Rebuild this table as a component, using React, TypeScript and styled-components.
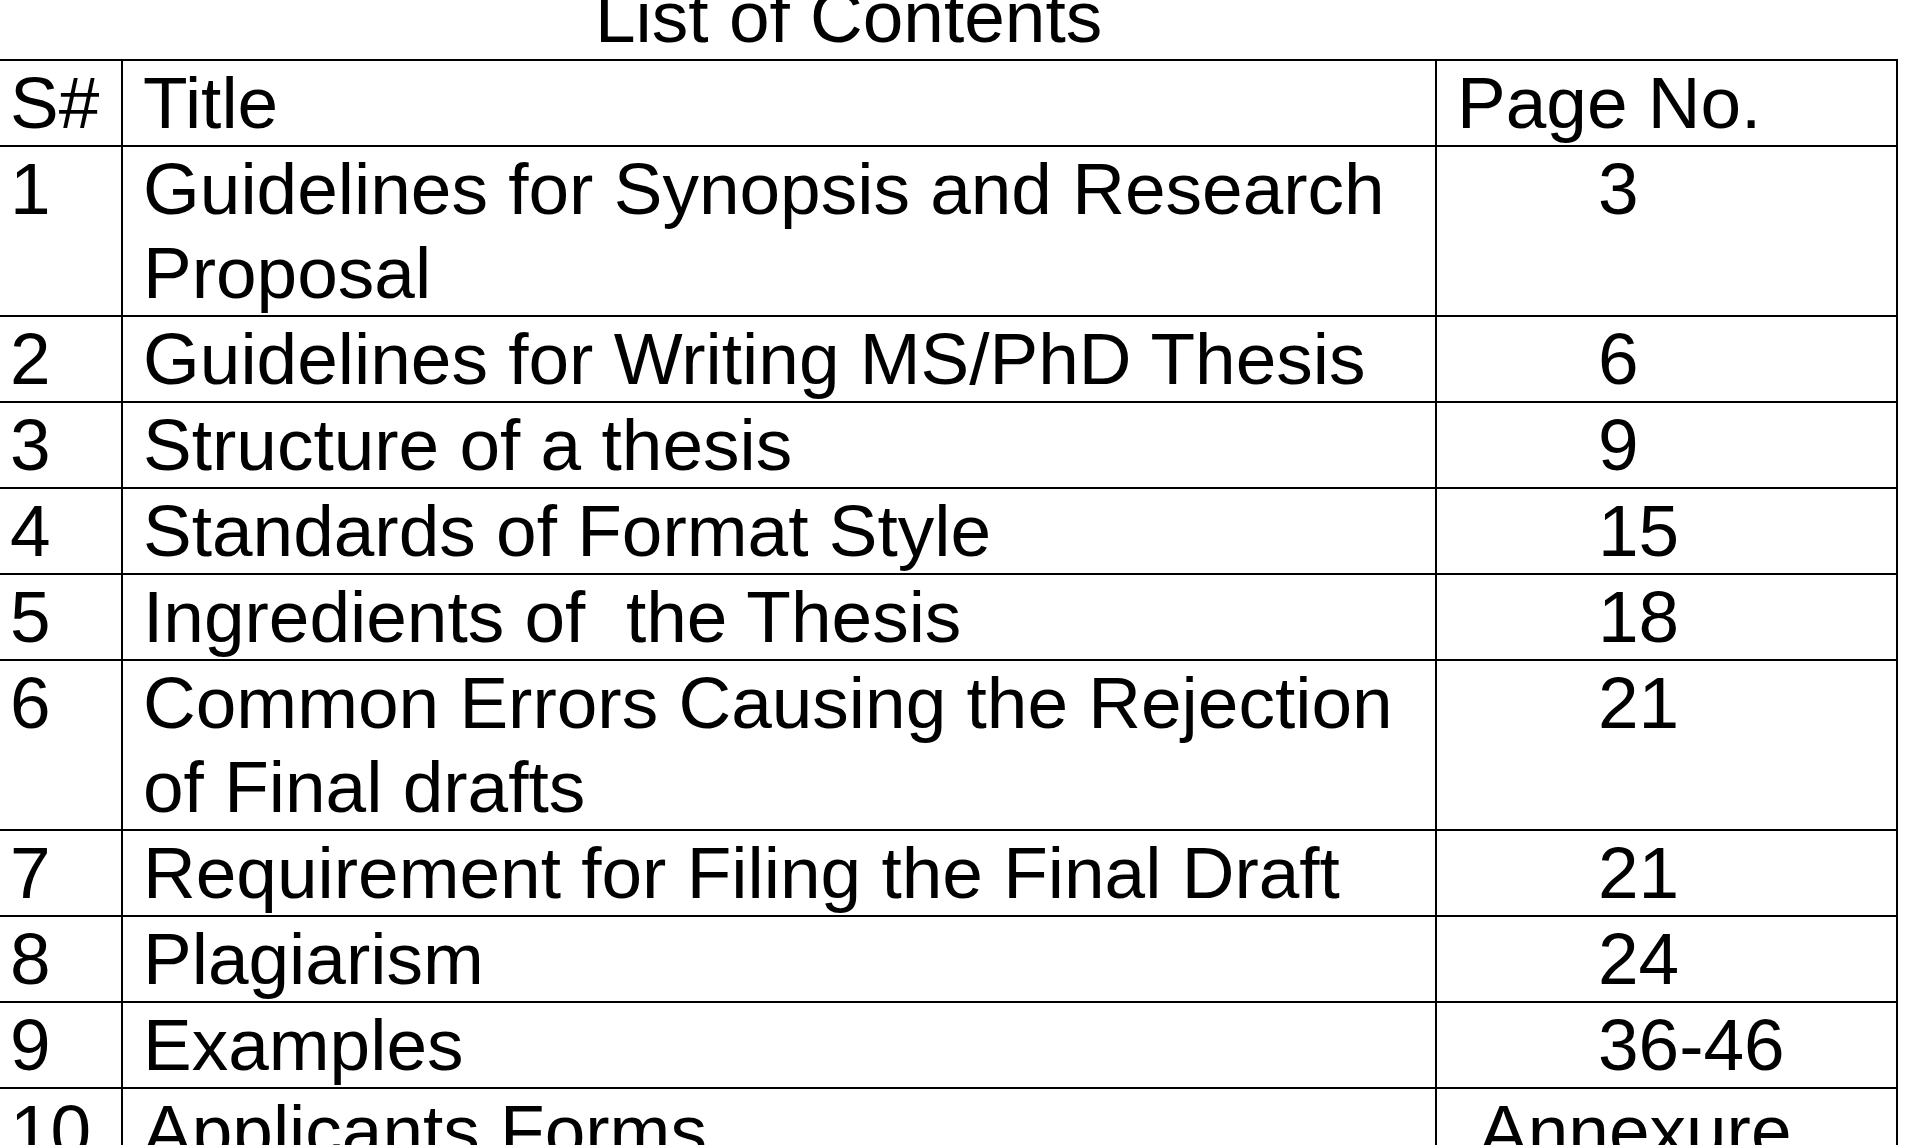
import React from 'react'
import styled, { createGlobalStyle } from 'styled-components';

const GlobalStyle = createGlobalStyle`
    html, body {
        margin: 0;
        padding: 0;
        background: #FFFFFF;
        overflow: hidden;
    }
    body {
        font-family: "Liberation Sans", Arial, sans-serif;
        color: #000000;
    }
`

const Page = styled.div`
    width: 1928px;
    height: 1145px;
    overflow: hidden;
`

const Heading = styled.h1`
    margin: -25px 0 0 0;
    padding-left: 595px;
    height: 84px;
    font-size: 73px;
    font-weight: normal;
    line-height: 84px;
    white-space: nowrap;
`

const ContentsTable = styled.table`
    border-collapse: collapse;
    width: 1897px;
    table-layout: fixed;
    font-size: 73px;
    line-height: 84px;
`

const Cell = styled.td<{ $indent?: number; $first?: boolean }>`
    border: 2px solid #000000;
    border-left: ${p => (p.$first ? 'none' : '2px solid #000000')};
    padding: 0 0 0 ${p => p.$indent ?? 20}px;
    vertical-align: top;
    white-space: pre-wrap;
    overflow: hidden;
`

type Row = { no: string; title: string; page: string; indent: number }

const rows: Row[] = [
    { no: '1', title: 'Guidelines for Synopsis and Research Proposal', page: '3', indent: 161 },
    { no: '2', title: 'Guidelines for Writing MS/PhD Thesis', page: '6', indent: 161 },
    { no: '3', title: 'Structure of a thesis', page: '9', indent: 161 },
    { no: '4', title: 'Standards of Format Style', page: '15', indent: 161 },
    { no: '5', title: 'Ingredients of  the Thesis', page: '18', indent: 161 },
    { no: '6', title: 'Common Errors Causing the Rejection of Final drafts', page: '21', indent: 161 },
    { no: '7', title: 'Requirement for Filing the Final Draft', page: '21', indent: 161 },
    { no: '8', title: 'Plagiarism', page: '24', indent: 161 },
    { no: '9', title: 'Examples', page: '36-46', indent: 161 },
    { no: '10', title: 'Applicants Forms', page: 'Annexure', indent: 42 },
]

export default function App() {
  return (
    <>
    <GlobalStyle />
    <Page>
      <Heading>List of Contents</Heading>
      <ContentsTable>
        <colgroup>
          <col style={{ width: 122 }} />
          <col style={{ width: 1314 }} />
          <col style={{ width: 461 }} />
        </colgroup>
        <tbody>
          <tr>
            <Cell $first $indent={10}>S#</Cell>
            <Cell>Title</Cell>
            <Cell $indent={20}>Page No.</Cell>
          </tr>
          {rows.map(row => <tr key={row.no}>
              <Cell $first $indent={10}>{row.no}</Cell>
              <Cell>{row.title}</Cell>
              <Cell $indent={row.indent}>{row.page}</Cell>
          </tr>)}
        </tbody>
      </ContentsTable>
    </Page>
    </>
  )
}
